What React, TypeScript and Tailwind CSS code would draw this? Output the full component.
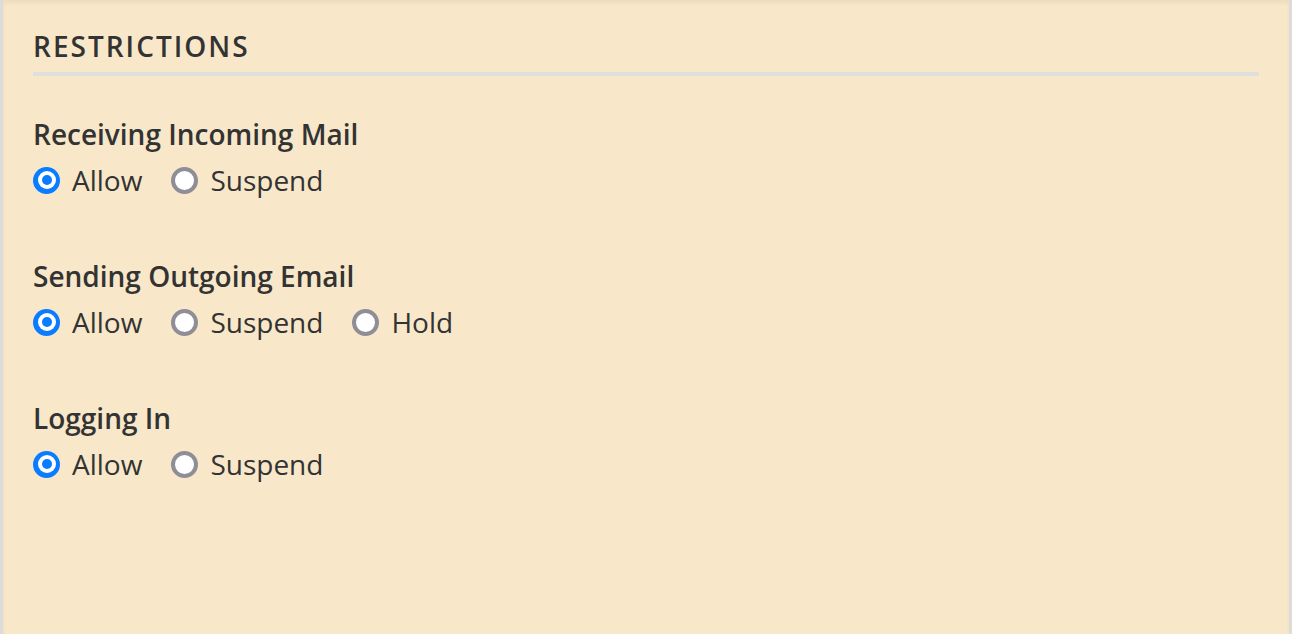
import { useState } from "react";

type Group = {
  id: string;
  label: string;
  options: string[];
};

const GROUPS: Group[] = [
  { id: "incoming", label: "Receiving Incoming Mail", options: ["Allow", "Suspend"] },
  { id: "outgoing", label: "Sending Outgoing Email", options: ["Allow", "Suspend", "Hold"] },
  { id: "login", label: "Logging In", options: ["Allow", "Suspend"] },
];

function Radio({ checked }: { checked: boolean }) {
  if (checked) {
    return (
      <span className="w-[27px] h-[27px] rounded-full bg-[#0a7cff] flex items-center justify-center shrink-0">
        <span className="w-[18px] h-[18px] rounded-full bg-white flex items-center justify-center">
          <span className="w-[10px] h-[10px] rounded-full bg-[#0a7cff]" />
        </span>
      </span>
    );
  }
  return <span className="w-[27px] h-[27px] rounded-full border-[4px] border-[#8f8e97] bg-white shrink-0" />;
}

export default function App() {
  const [values, setValues] = useState<Record<string, string>>({
    incoming: "Allow",
    outgoing: "Allow",
    login: "Allow",
  });

  return (
    <div
      className="h-[634px] bg-[#f8e8c9] border-l-[3px] border-r-[3px] border-[#dedcd8] shadow-[inset_0_3px_4px_rgba(0,0,0,0.05)] px-[30px] pt-[30px] text-[#333333]"
      style={{ fontFamily: '"Open Sans", sans-serif' }}
    >
      <h2 className="text-[28px] leading-[32px] font-semibold tracking-[2px] pb-[10px] border-b-4 border-[#dfdfdd]">
        RESTRICTIONS
      </h2>

      <div className="flex flex-col gap-[64px] pt-[42px]">
        {GROUPS.map((g) => (
          <div key={g.id} className="flex flex-col gap-[14px]">
            <p className="text-[28px] leading-[32px] font-semibold">{g.label}</p>
            <div className="flex items-center gap-[29px]">
              {g.options.map((o) => (
                <label
                  key={o}
                  className="flex items-center gap-[12px] cursor-pointer"
                  onClick={() => setValues({ ...values, [g.id]: o })}
                >
                  <Radio checked={values[g.id] === o} />
                  <span className="text-[28px] leading-[32px]">{o}</span>
                </label>
              ))}
            </div>
          </div>
        ))}
      </div>
    </div>
  );
}
